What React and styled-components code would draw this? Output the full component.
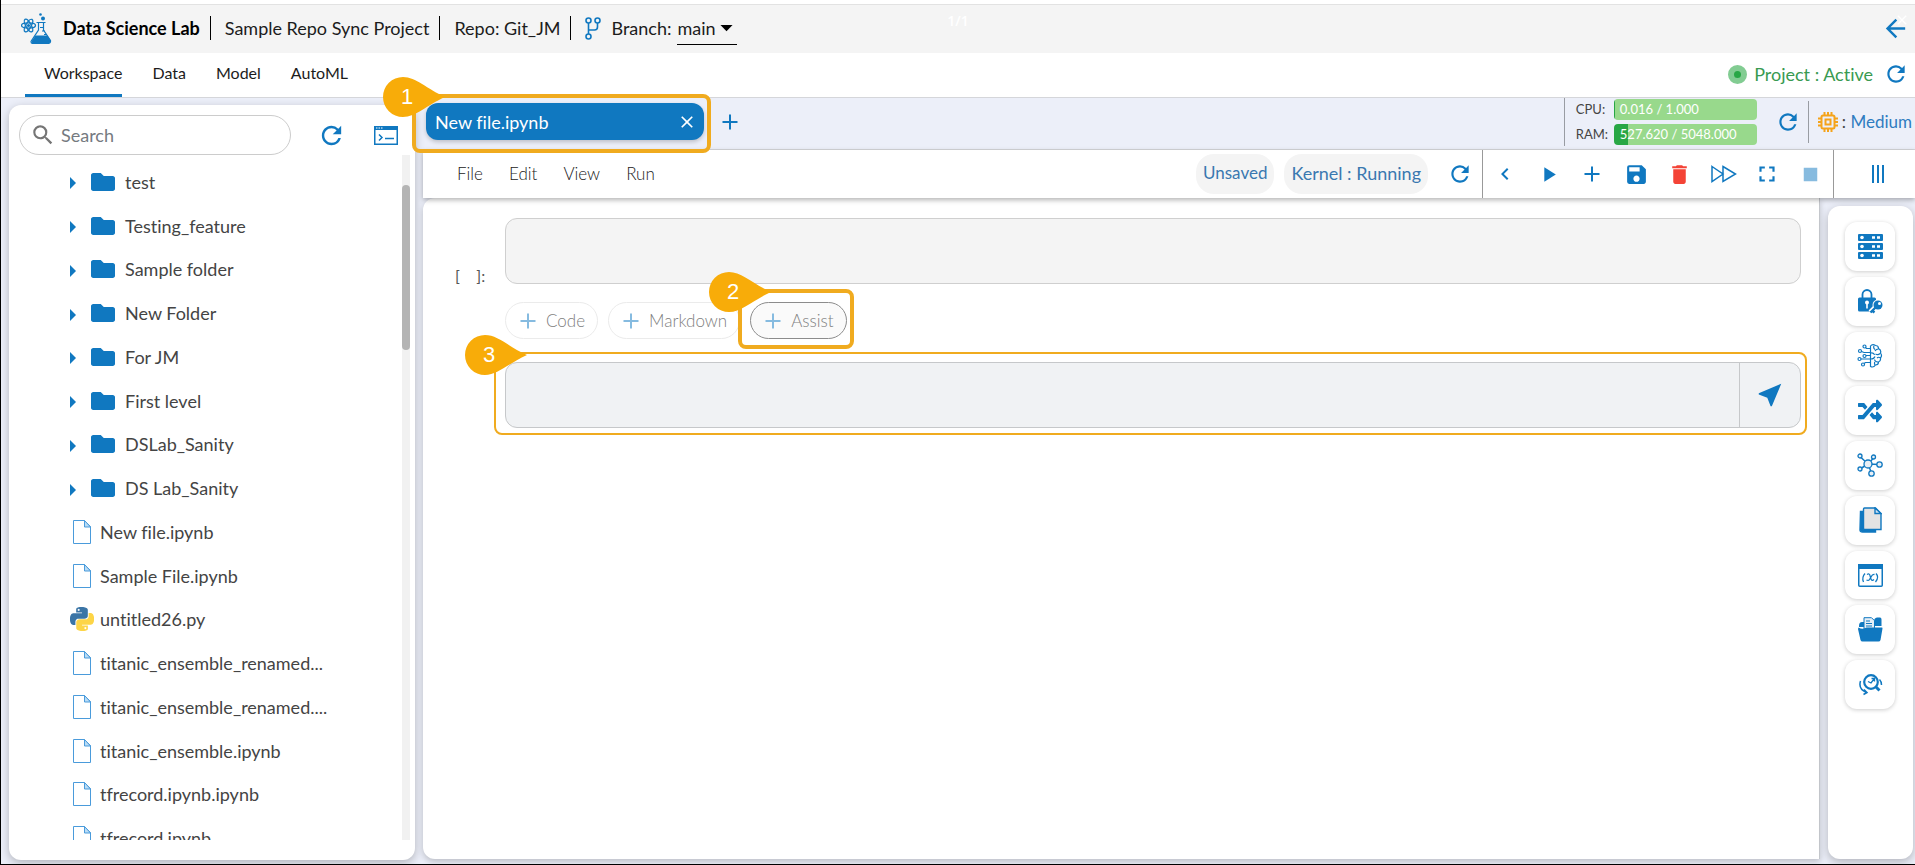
import React from "react";
import styled, { createGlobalStyle, css } from "styled-components";
import {
	MdArrowBack,
	MdArrowDropDown,
	MdChevronLeft,
	MdClose,
	MdDelete,
	MdFullscreen,
	MdNearMe,
	MdPlayArrow,
	MdRefresh,
	MdSave,
	MdSearch,
	MdStop,
} from "react-icons/md";
import { FaFolder, FaRandom } from "react-icons/fa";

const color = {
	blue: "#1078c0",
	lavender: "#eceff9",
	grey: "#f4f4f4",
	line: "#d5d6da",
	orange: "#f0ab1f",
	callout: "#f8ac09",
};

const GlobalStyle = createGlobalStyle`
	* {
		box-sizing: border-box;
	}
	body {
		margin: 0;
		font-family: Lato, "Open Sans", sans-serif;
		font-size: 18px;
		font-variant-ligatures: none;
		line-height: 24px;
		color: #444;
	}
	button,
	input,
	select,
	textarea {
		font: inherit;
		color: inherit;
		margin: 0;
	}
	svg {
		display: block;
		flex: none;
	}
`;

const Page = styled.div`
	display: flex;
	flex-direction: column;
	height: 100vh;
	overflow: hidden;
	border-left: 1px solid #000;
	border-bottom: 1px solid #000;
	background: ${color.lavender};
`;

const TopStrip = styled.div`
	flex: none;
	height: 5px;
	background: #fff;
	border-bottom: 1px solid #e2e2e2;
`;

const Header = styled.header`
	flex: none;
	display: flex;
	align-items: center;
	height: 48px;
	padding: 0 8px 2px 20px;
	background: ${color.grey};
	color: #1c1c1c;
	position: relative;
`;

const Title = styled.h1`
	margin: 0 10px 0 11px;
	font-size: 18px;
	font-weight: 700;
	color: #000;
`;

const Crumb = styled.span`
	padding: 0 10px 0 14px;
	border-left: 1px solid #000;
`;

const BranchPicker = styled.div`
	display: flex;
	align-items: center;
	height: 24px;
	padding-left: 14px;
	border-left: 1px solid #000;

	label {
		margin: 0 6px 0 10px;
	}
`;

const SelectBox = styled.div`
	display: flex;
	align-items: center;
	width: 60px;
	height: 33px;
	border-bottom: 1px solid #000;
	position: relative;

	select {
		width: 100%;
		padding: 0;
		border: none;
		background: none;
		appearance: none;
	}

	svg {
		position: absolute;
		right: -4px;
		color: #000;
		pointer-events: none;
	}
`;

const Counter = styled.span`
	position: absolute;
	left: 50%;
	top: 4px;
	transform: translateX(-50%);
	font-family: "Open Sans", sans-serif;
	font-size: 14px;
	font-weight: 600;
	color: #fff;
`;

const CornerClose = styled.div`
	position: absolute;
	right: 5px;
	top: 7px;
	color: #fff;
`;

const IconButton = styled.button`
	display: flex;
	align-items: center;
	justify-content: center;
	flex: none;
	width: ${(p) => p.$width || 32}px;
	height: 32px;
	padding: 0;
	border: none;
	background: none;
	color: ${(p) => p.$color || color.blue};
	cursor: pointer;
`;

const Spacer = styled.div`
	flex: 1;
`;

const Nav = styled.nav`
	flex: none;
	display: flex;
	align-items: stretch;
	gap: 30px;
	height: 45px;
	padding: 0 3px 0 43px;
	background: #fff;
	border-bottom: 1px solid ${color.line};
`;

const NavLink = styled.a`
	padding-top: 8px;
	font-size: 16px;
	color: #1c1c1c;
	text-decoration: none;
	position: relative;

	&::after {
		content: "";
		display: ${(p) => (p.$active ? "block" : "none")};
		position: absolute;
		left: -19px;
		right: 0;
		bottom: 0;
		height: 3px;
		background: ${color.blue};
	}
`;

const Status = styled.div`
	display: flex;
	align-items: center;
	gap: 7px;
	padding-bottom: 2px;
	color: #399a51;
`;

const Dot = styled.span`
	width: 19px;
	height: 19px;
	border-radius: 50%;
	border: 6px solid #82cc92;
	background: #28a745;
`;

const Body = styled.div`
	flex: 1;
	display: flex;
	min-height: 0;
`;

const card = css`
	background: #fff;
	border-radius: 12px;
	box-shadow: 0 3px 10px rgba(0, 0, 0, 0.25);
`;

const Sidebar = styled.aside`
	${card}
	flex: none;
	display: flex;
	flex-direction: column;
	width: 406px;
	margin: 7px 8px 4px;
	padding: 10px 5px 20px 10px;
`;

const SidebarTools = styled.div`
	flex: none;
	display: flex;
	align-items: center;
	height: 40px;
	padding-right: 8px;
`;

const SearchBox = styled.div`
	display: flex;
	align-items: center;
	width: 272px;
	height: 40px;
	margin-right: 24px;
	padding: 0 10px;
	border: 1px solid #ccc;
	border-radius: 20px;
	color: #757575;

	input {
		width: 100%;
		margin-left: 5px;
		padding: 0;
		border: none;
		outline: none;
		background: none;
	}

	input::placeholder {
		color: #757a80;
		opacity: 1;
	}
`;

const TreeViewport = styled.div`
	flex: 1;
	display: flex;
	min-height: 0;
	overflow: hidden;
`;

const Tree = styled.ul`
	flex: 1;
	display: grid;
	grid-auto-rows: 1fr;
	height: 705px;
	margin: 0;
	padding: 5px 0 0 51px;
	list-style: none;
`;

const TreeItem = styled.li`
	display: flex;
	align-items: center;
	gap: ${(p) => (p.$folder ? 10 : 6)}px;
	white-space: nowrap;
`;

const ScrollTrack = styled.div`
	width: 8px;
	padding-top: 30px;
	background: #f1f1f1;

	&::before {
		content: "";
		display: block;
		height: 165px;
		border-radius: 4px;
		background: #b4b4b4;
	}
`;

const Main = styled.main`
	flex: 1;
	display: flex;
	flex-direction: column;
	min-width: 0;
`;

const TabBar = styled.div`
	flex: none;
	display: flex;
	align-items: center;
	height: 52px;
	padding: 0 0 4px 3px;
	border-bottom: 1px solid ${color.line};
`;

const FileTab = styled.div`
	display: flex;
	align-items: center;
	width: 278px;
	height: 37px;
	margin-right: 10px;
	padding: 0 1px 0 9px;
	border-radius: 12px;
	background: ${color.blue};
	color: #fff;
	box-shadow: 0 2px 4px rgba(0, 0, 0, 0.2);
	position: relative;
`;

const Highlight = styled.div`
	position: absolute;
	inset: ${(p) => p.$inset};
	border: ${(p) => p.$stroke || 4}px solid ${color.orange};
	border-radius: 8px;
	pointer-events: none;
	z-index: 2;
`;

const CalloutShape = styled.div`
	position: absolute;
	left: ${(p) => p.$left}px;
	top: ${(p) => p.$top}px;
	width: 62px;
	height: 40px;
	color: #fff;
	font-family: "Liberation Sans", sans-serif;
	font-size: 22px;
	line-height: 40px;

	svg {
		position: absolute;
	}

	span {
		position: relative;
		display: block;
		width: 48px;
		text-align: center;
	}
`;

const Usage = styled.div`
	display: flex;
	flex-direction: column;
	justify-content: center;
	gap: 4px;
	height: 48px;
	margin-right: 15px;
	padding-left: 11px;
	border-left: 1px solid #999ca3;
`;

const UsageRow = styled.div`
	display: flex;
	align-items: center;
	height: 21px;
	font-size: 13px;

	> span {
		width: 38px;
	}
`;

const Meter = styled.div`
	display: flex;
	align-items: center;
	width: 143px;
	height: 21px;
	padding-left: 6px;
	border-radius: 4px;
	color: #fff;
	background: linear-gradient(90deg, #28a745 ${(p) => p.$percent}%, #98d98c ${(p) => p.$percent}%);
`;

const Machine = styled.div`
	display: flex;
	align-items: center;
	gap: 4px;
	height: 42px;
	margin-left: 4px;
	padding: 0 3px 0 9px;
	border-left: 1px solid #999ca3;
	font-size: 17px;

	b {
		font-weight: 400;
		color: #2f7cc0;
	}
`;

const Toolbar = styled.div`
	flex: none;
	display: flex;
	align-items: center;
	height: 48px;
	padding-left: 21px;
	background: #fff;
	box-shadow: 0 2px 5px rgba(0, 0, 0, 0.3);
	position: relative;
	z-index: 1;
`;

const MenuButton = styled.button`
	padding: 0 13px;
	border: none;
	background: none;
	font-size: 17px;
	font-weight: 300;
	color: #222;
	cursor: pointer;
`;

const Pill = styled.span`
	display: flex;
	align-items: center;
	height: 40px;
	margin-right: 10px;
	padding: 0 7px 2px;
	border-radius: 18px;
	background: ${color.grey};
	font-size: ${(p) => p.$size || 18}px;
	color: #3a78b0;
`;

const ToolGroup = styled.div`
	display: flex;
	align-items: center;
	justify-content: space-between;
	width: ${(p) => p.$width}px;
	height: 48px;
	padding: 0 6px;
	border-left: 1px solid #999;
`;

const PanelToggle = styled.div`
	display: flex;
	align-items: center;
	height: 48px;
	padding: 0 21px 0 28px;
	border-left: 1px solid #999;
`;

const Workspace = styled.div`
	flex: 1;
	display: flex;
	min-height: 0;
`;

const Notebook = styled.section`
	flex: 1;
	margin-bottom: 5px;
	padding: 20px 18px 0 32px;
	border-right: 1px solid #c4c7cc;
	border-radius: 12px 0 0 12px;
	background: #fff;
	box-shadow: 0 3px 6px rgba(0, 0, 0, 0.2);
`;

const Cell = styled.div`
	display: grid;
	grid-template-columns: 50px 1fr;
	row-gap: 18px;
`;

const Prompt = styled.span`
	align-self: end;
	margin-bottom: -4px;
	font-size: 16px;
	color: #555;
	white-space: pre;
`;

const CodeInput = styled.textarea`
	display: block;
	width: 100%;
	height: 66px;
	border: 1px solid #cfcfcf;
	border-radius: 12px;
	background: ${color.grey};
	resize: none;
`;

const CellActions = styled.div`
	grid-column: 2;
	display: flex;
	gap: 10px;
`;

const AddButton = styled.button`
	display: flex;
	align-items: center;
	gap: 10px;
	height: 37px;
	padding: 0 12px 0 14px;
	border: 1px solid ${(p) => (p.$strong ? "#8c8c8c" : "#ebebeb")};
	border-radius: 19px;
	background: ${(p) => (p.$strong ? "#fafafa" : "#fff")};
	font-size: 17px;
	font-weight: 300;
	color: #808080;
	cursor: pointer;

	svg {
		color: #86bbe0;
	}
`;

const Anchor = styled.div`
	position: relative;
`;

const AssistRow = styled.form`
	grid-column: 2;
	display: flex;
	height: 66px;
	margin-top: 5px;
	border: 1px solid #c6c8ca;
	border-radius: 12px;
	background: #f0f2f4;
	position: relative;

	input {
		flex: 1;
		padding: 0 12px;
		border: none;
		outline: none;
		background: none;
	}
`;

const SendButton = styled.button`
	display: flex;
	align-items: center;
	justify-content: center;
	width: 61px;
	padding: 0;
	border: none;
	border-left: 1px solid #c6c8ca;
	background: none;
	color: ${color.blue};
`;

const Rail = styled.div`
	flex: none;
	display: flex;
	padding: 8px 2px 5px 8px;
`;

const RailCard = styled.div`
	${card}
	width: 85px;
	padding: 16px 17px;
`;

const RailList = styled.div`
	display: grid;
	grid-auto-rows: 1fr;
	gap: 6px;
	height: 487px;
`;

const RailButton = styled.button`
	display: flex;
	align-items: center;
	justify-content: center;
	width: 50px;
	padding: 0;
	border: none;
	border-radius: 12px;
	background: #fff;
	color: ${color.blue};
	box-shadow: 0 1px 4px rgba(0, 0, 0, 0.2);
`;

const ShuffleIcon = styled(FaRandom)`
	width: 24px;
	height: 26px;
`;

const LogoIcon = () => (
	<svg width="31" height="31" viewBox="0 0 31 31" fill="none" stroke={color.blue}>
		<g strokeWidth="1.3">
			<ellipse cx="7.5" cy="12.5" rx="7" ry="2.6" />
			<ellipse cx="7.5" cy="12.5" rx="7" ry="2.6" transform="rotate(60 7.5 12.5)" />
			<ellipse cx="7.5" cy="12.5" rx="7" ry="2.6" transform="rotate(120 7.5 12.5)" />
		</g>
		<circle cx="7.5" cy="12.5" r="1.6" fill={color.blue} stroke="none" />
		<path
			d="M15.5 9.5h9M17.5 10v7L10 28.5q0 2 2 2h15.5q2.5-.5 2-3L22.5 17v-7M22 14.5h-3M24 18h-3M26 21.5h-3"
			strokeWidth="1.2"
		/>
		<path d="M14.5 22.5h12l3 5q0 3-2.5 3H12.500q-2.500-.5-1.500-3z" fill={color.blue} stroke="none" />
		<circle cx="22" cy="5.5" r="2" fill={color.blue} stroke="none" />
		<circle cx="19.5" cy="1.5" r="1.3" fill={color.blue} stroke="none" />
	</svg>
);

const BranchIcon = () => (
	<svg width="16" height="23" viewBox="0 0 16 23" fill="none" stroke={color.blue} strokeWidth="1.6">
		<circle cx="3.5" cy="3.5" r="2.5" />
		<circle cx="12.5" cy="3.5" r="2.5" />
		<circle cx="3.5" cy="19.5" r="2.5" />
		<path d="M3.5 6v11M12.5 6v4q0 3-3 3h-6" />
	</svg>
);

const TerminalIcon = () => (
	<svg width="24" height="19" viewBox="0 0 24 19">
		<path d="M.75.75h22.5v17.5H.75z" fill="#fff" stroke={color.blue} strokeWidth="1.5" />
		<path d="M0 0h24v4H0z" fill={color.blue} />
		<path d="M2 2h1.5M4.5 2H6M7 2h1.5" stroke="#fff" />
		<path d="M5 8.5l3 3-3 3M11 12.5h9" fill="none" stroke={color.blue} strokeWidth="1.5" />
	</svg>
);

const Caret = styled.span`
	margin: 3px 5px 0 0;
	border: 6px solid transparent;
	border-left-color: ${color.blue};
	border-right: none;
`;

const FileIcon = () => (
	<svg width="24" height="24" viewBox="0 0 24 24" stroke="#4a9bdb">
		<path d="M3.5.5h11l6 6v17h-17z" fill="#fff" />
		<path d="M14.5.5v6.5h6z" fill="#b9dcf6" />
	</svg>
);

const PythonIcon = () => (
	<svg width="24" height="24" viewBox="0 0 24 24">
		<path
			fill="#3b75a6"
			d="M14.25.18l.9.2.73.26.59.3.45.32.34.34.25.34.16.33.1.3.04.26.02.2-.01.13V8.5l-.05.63-.13.55-.21.46-.26.38-.3.31-.33.25-.35.19-.35.14-.33.1-.3.07-.26.04-.21.02H8.77l-.69.05-.59.14-.5.22-.41.27-.33.32-.27.35-.2.36-.15.37-.1.35-.07.32-.04.27-.02.21v3.06H3.17l-.21-.03-.28-.07-.32-.12-.35-.18-.36-.26-.36-.36-.35-.46-.32-.59-.28-.73-.21-.88-.14-1.05-.05-1.23.06-1.22.16-1.04.24-.87.32-.71.36-.57.4-.44.42-.33.42-.24.4-.16.36-.1.32-.05.24-.01h.16l.06.01h8.16v-.83H6.18l-.01-2.75-.02-.37.05-.34.11-.31.17-.28.25-.26.31-.23.38-.2.44-.18.51-.15.58-.12.64-.1.71-.06.77-.04.84-.02 1.27.05zm-6.3 1.98l-.23.33-.08.41.08.41.23.34.33.22.41.09.41-.09.33-.22.23-.34.08-.41-.08-.41-.23-.33-.33-.22-.41-.09-.41.09z"
		/>
		<path
			fill="#fdd547"
			d="M21.1 6.11l.28.06.32.12.35.18.36.27.36.35.35.47.32.59.28.73.21.88.14 1.04.05 1.23-.06 1.23-.16 1.04-.24.86-.32.71-.36.57-.4.45-.42.33-.42.24-.4.16-.36.09-.32.05-.24.02-.16-.01h-8.22v.82h5.84l.01 2.76.02.36-.05.34-.11.31-.17.29-.25.25-.31.24-.38.2-.44.17-.51.15-.58.13-.64.09-.71.07-.77.04-.84.01-1.27-.04-1.07-.14-.9-.2-.73-.25-.59-.3-.45-.33-.34-.34-.25-.34-.16-.33-.1-.3-.04-.25-.02-.2.01-.13v-5.34l.05-.64.13-.54.21-.46.26-.38.3-.32.33-.24.35-.2.35-.14.33-.1.3-.06.26-.04.21-.02.13-.01h5.84l.69-.05.59-.14.5-.21.41-.28.33-.32.27-.35.2-.36.15-.36.1-.35.07-.32.04-.28.02-.21V6.07h2.09l.14.01zm-6.47 14.25l-.23.33-.08.41.08.41.23.33.33.23.41.08.41-.08.33-.23.23-.33.08-.41-.08-.41-.23-.33-.33-.23-.41-.08-.41.08z"
		/>
	</svg>
);

const ChipIcon = () => (
	<svg width="20" height="20" viewBox="0 0 20 20" fill="none" stroke="#f5a31a" strokeWidth="2">
		<rect x="3.5" y="3.5" width="13" height="13" rx="1.5" />
		<rect x="7.5" y="7.5" width="5" height="5" />
		<path d="M6.5 0v3M10 0v3M13.5 0v3M6.5 17v3M10 17v3M13.5 17v3M0 6.5h3M0 10h3M0 13.5h3M17 6.5h3M17 10h3M17 13.5h3" />
	</svg>
);

const PlusIcon = () => (
	<svg width="16" height="16" viewBox="0 0 16 16" fill="none" stroke="currentColor" strokeWidth="2">
		<path d="M8 .5v15M.5 8h15" />
	</svg>
);

const RunAllIcon = () => (
	<svg width="26" height="18" viewBox="0 0 26 18" fill="none" stroke="currentColor" strokeWidth="1.5">
		<path d="M1 1.5L12 9 1 16.5zM12 1.5L24.5 9 12 16.5z" />
	</svg>
);

const BarsIcon = () => (
	<svg width="14" height="18" viewBox="0 0 14 18" stroke="currentColor" strokeWidth="2">
		<path d="M2 0v18M7 0v18M12 0v18" />
	</svg>
);

const ServerIcon = () => (
	<svg width="25" height="25" viewBox="0 0 25 25">
		{[0, 9, 18].map((y) => (
			<g key={y}>
				<rect y={y} width="25" height="7" rx="1" fill={color.blue} />
				<circle cx="4" cy={y + 3.5} r="1.8" fill="#fff" />
				<path d={`M14 ${y + 3.5}h3M19 ${y + 3.5}h3`} stroke="#fff" strokeWidth="2.5" />
			</g>
		))}
	</svg>
);

const LockKeyIcon = () => (
	<svg width="25" height="25" viewBox="0 0 25 25">
		<path d="M4.5 9V5.5a4.5 4.5 0 019 0V9" fill="none" stroke={color.blue} strokeWidth="1.8" />
		<path d="M1.5 8.5h15q1.5 0 1.5 1.5v3l-6 9.5H1.5Q0 22.5 0 21V10q0-1.5 1.5-1.5z" fill={color.blue} />
		<circle cx="9" cy="13.5" r="2" fill="#fff" />
		<path d="M9 14v5.5" stroke="#fff" strokeWidth="1.6" />
		<circle cx="20" cy="16" r="5.5" fill="#fff" />
		<path d="M17 19l-4.5 4.5" stroke="#fff" strokeWidth="5.5" />
		<circle cx="20" cy="16" r="4.5" fill={color.blue} />
		<path d="M18 18l-5.5 5.500M14 21.500l2.500 2" stroke={color.blue} strokeWidth="2.4" />
		<circle cx="21.5" cy="14.5" r="1.5" fill="#fff" />
	</svg>
);

const BrainIcon = () => (
	<svg width="26" height="26" viewBox="0 0 26 26" fill="none" stroke={color.blue} strokeWidth="1.2">
		<path d="M13.5 3q2-2.5 5-.5 3 0 3 3 3 1.5 2 4.5 2 2.5 0 5 .5 3-2 4 0 3-3 3-2 3-5 1.5zM17 3q-1 2 1 3.5M21.5 6q-2.500 0-3.500 2M23 10.5q-2 2-4.500.5M14 10q3-.5 3.500 2M23.500 15q-2-1.500-3.500 0M14 16q3 0 4-2.500M21 19q-3 0-3.500-2.500M18 22q-1-2 0-3" />
		<path d="M13 5.500H9.500L8.500 4.500M13 9.500H7L4.500 8.500M13 12.500H9M13 16H4M13 19.500H8.500L7 20.500" />
		<circle cx="7.5" cy="3.5" r="1.5" />
		<circle cx="3" cy="8" r="1.5" />
		<circle cx="7.5" cy="13" r="1.5" />
		<circle cx="2.5" cy="16" r="1.5" />
		<circle cx="6" cy="21.5" r="1.5" />
	</svg>
);

const NodesIcon = () => (
	<svg width="26" height="24" viewBox="0 0 26 24" stroke={color.blue} strokeWidth="1.3" fill="#e9eff5">
		<path d="M11 11L3 3.500M11 11L3 16M11 11l6-6.500M11 11l11.500.5M11 11l3.500 9" strokeWidth="1.5" />
		<circle cx="11" cy="11" r="4" />
		<circle cx="3" cy="3" r="2" />
		<circle cx="3" cy="16" r="2" />
		<circle cx="16.5" cy="4" r="2" />
		<circle cx="22.5" cy="11.5" r="2.7" />
		<circle cx="14.5" cy="20.5" r="2.7" />
	</svg>
);

const CopyIcon = () => (
	<svg width="23" height="26" viewBox="0 0 23 26" strokeWidth="1.4">
		<path d="M1.5 4.5h15V25h-13Q1 25 1 23z" fill={color.blue} stroke={color.blue} />
		<path d="M5.5 1h11L22 6.5v16H5.5q-1 0-1-1.500V2.500Q4.500 1 5.500 1z" fill="#e3e3e3" stroke={color.blue} />
		<path d="M16 1v5.500h6z" fill="#cfe2f2" stroke={color.blue} />
	</svg>
);

const VariableIcon = () => (
	<svg width="25" height="23" viewBox="0 0 25 23" fill="none" stroke={color.blue}>
		<rect x=".75" y=".75" width="23.5" height="21.5" rx="1" strokeWidth="1.5" />
		<path d="M0 0h25v5H0z" fill={color.blue} stroke="none" />
		<path
			d="M7 9.500q-3.500 4-1.500 8.500M18 9.500q3.500 3.500-.5 8.500M9 10.500q2.500-1.500 3 1l1 3.500q1 2.500 3 .5M16.500 10.500q-2-.5-3.500 2.500l-1.500 2.500q-1 1.500-3 .5"
			strokeWidth="1.3"
		/>
	</svg>
);

const FolderDocIcon = () => (
	<svg width="25" height="25" viewBox="0 0 25 25">
		<path d="M1 9q0-4 3-4h2v5H1zM16 4q0-3 3-3.500h3q1.500 0 1.500 2V9H16z" fill={color.blue} />
		<path d="M6 .7h7.5l3 3V12H6z" fill="#e6eef5" stroke={color.blue} />
		<path d="M8 4h4M8 6.5h6M8 9h6" stroke={color.blue} />
		<path
			d="M.5 10.500q4 2.500 8 0H24q.5 0 .5 1l-2 11.500q-.5 1.500-2 1.500h-16q-1.500 0-2-1.500L0 12z"
			fill={color.blue}
		/>
	</svg>
);

const InspectIcon = () => (
	<svg width="25" height="24" viewBox="0 0 25 24" fill="none" stroke={color.blue}>
		<circle cx="13" cy="9" r="6.8" strokeWidth="2.2" />
		<path d="M17.5 13.5l4 4" strokeWidth="3" />
		<path d="M10 8.5l3 1.500 3-4M13.500 5.500h3v3" strokeWidth="1.3" />
		<path d="M2.5 8Q0 16 8.500 19.500M6 16.500l3 3-3.500 2M21.500 6.500q2 2 2 5.500" strokeWidth="1.5" />
	</svg>
);

const Callout = ({ number, left = -33, top = -21 }) => (
	<CalloutShape $left={left} $top={top}>
		<svg width="62" height="40" viewBox="0 0 62 40" fill={color.callout}>
			<path d="M20 0C33 0 44 12 62 20 44 28 33 40 20 40A20 20 0 0120 0z" />
		</svg>
		<span>{number}</span>
	</CalloutShape>
);

const folders = [
	"test",
	"Testing_feature",
	"Sample folder",
	"New Folder",
	"For JM",
	"First level",
	"DSLab_Sanity",
	"DS Lab_Sanity",
];

const files = [
	"New file.ipynb",
	"Sample File.ipynb",
	"untitled26.py",
	"titanic_ensemble_renamed...",
	"titanic_ensemble_renamed....",
	"titanic_ensemble.ipynb",
	"tfrecord.ipynb.ipynb",
	"tfrecord.ipynb",
];

const railItems = [
	["Datasets", <ServerIcon />],
	["Secrets", <LockKeyIcon />],
	["Algorithms", <BrainIcon />],
	["Transforms", <ShuffleIcon preserveAspectRatio="none" />],
	["Models", <NodesIcon />],
	["Artifacts", <CopyIcon />],
	["Variables", <VariableIcon />],
	["Files", <FolderDocIcon />],
	["Inspect", <InspectIcon />],
];

const TopHeader = () => (
	<Header>
		<LogoIcon />
		<Title>Data Science Lab</Title>
		<Crumb>Sample Repo Sync Project</Crumb>
		<Crumb>Repo: Git_JM</Crumb>
		<BranchPicker>
			<BranchIcon />
			<label htmlFor="branch">Branch:</label>
			<SelectBox>
				<select id="branch" defaultValue="main">
					<option>main</option>
				</select>
				<MdArrowDropDown size={29} />
			</SelectBox>
		</BranchPicker>
		<Counter>1/1</Counter>
		<Spacer />
		<IconButton $width={24} aria-label="Back">
			<MdArrowBack size={29} />
		</IconButton>
		<CornerClose>
			<MdClose size={16} />
		</CornerClose>
	</Header>
);

const Navigation = () => (
	<Nav>
		<NavLink href="#workspace" $active>
			Workspace
		</NavLink>
		<NavLink href="#data">Data</NavLink>
		<NavLink href="#model">Model</NavLink>
		<NavLink href="#automl">AutoML</NavLink>
		<Spacer />
		<Status>
			<Dot />
			Project : Active
			<IconButton aria-label="Refresh project">
				<MdRefresh size={26} />
			</IconButton>
		</Status>
	</Nav>
);

const FileTree = () => (
	<Sidebar>
		<SidebarTools>
			<SearchBox>
				<MdSearch size={26} />
				<input type="search" placeholder="Search" aria-label="Search" />
			</SearchBox>
			<IconButton aria-label="Refresh files">
				<MdRefresh size={29} />
			</IconButton>
			<Spacer />
			<IconButton aria-label="Terminal">
				<TerminalIcon />
			</IconButton>
		</SidebarTools>
		<TreeViewport>
			<Tree>
				{folders.map((name) => (
					<TreeItem key={name} $folder>
						<Caret />
						<FaFolder size={24} color={color.blue} />
						{name}
					</TreeItem>
				))}
				{files.map((name) => (
					<TreeItem key={name}>
						{name.endsWith(".py") ? <PythonIcon /> : <FileIcon />}
						{name}
					</TreeItem>
				))}
			</Tree>
			<ScrollTrack />
		</TreeViewport>
	</Sidebar>
);

const Tabs = () => (
	<TabBar>
		<FileTab>
			New file.ipynb
			<Spacer />
			<IconButton $color="#fff" aria-label="Close file">
				<MdClose size={20} />
			</IconButton>
			<Highlight $inset="-9px -7px -13px -14px">
				<Callout number={1} />
			</Highlight>
		</FileTab>
		<IconButton aria-label="New tab">
			<PlusIcon />
		</IconButton>
		<Spacer />
		<Usage>
			<UsageRow>
				<span>CPU:</span>
				<Meter $percent={1}>0.016 / 1.000</Meter>
			</UsageRow>
			<UsageRow>
				<span>RAM:</span>
				<Meter $percent={10}>527.620 / 5048.000</Meter>
			</UsageRow>
		</Usage>
		<IconButton aria-label="Refresh usage">
			<MdRefresh size={26} />
		</IconButton>
		<Machine>
			<ChipIcon />
			<span>
				: <b>Medium</b>
			</span>
		</Machine>
	</TabBar>
);

const NotebookToolbar = () => (
	<Toolbar>
		<MenuButton>File</MenuButton>
		<MenuButton>Edit</MenuButton>
		<MenuButton>View</MenuButton>
		<MenuButton>Run</MenuButton>
		<Spacer />
		<Pill $size={17}>Unsaved</Pill>
		<Pill>Kernel : Running</Pill>
		<IconButton $width={44} aria-label="Restart kernel">
			<MdRefresh size={26} />
		</IconButton>
		<ToolGroup $width={351}>
			<IconButton aria-label="Previous">
				<MdChevronLeft size={24} />
			</IconButton>
			<IconButton aria-label="Run cell">
				<MdPlayArrow size={25} />
			</IconButton>
			<IconButton aria-label="Add cell">
				<PlusIcon />
			</IconButton>
			<IconButton aria-label="Save">
				<MdSave size={25} />
			</IconButton>
			<IconButton $color="#f44336" aria-label="Delete">
				<MdDelete size={25} />
			</IconButton>
			<IconButton aria-label="Run all">
				<RunAllIcon />
			</IconButton>
			<IconButton aria-label="Full screen">
				<MdFullscreen size={26} />
			</IconButton>
			<IconButton $color="#87bbdf" aria-label="Stop">
				<MdStop size={27} />
			</IconButton>
		</ToolGroup>
		<PanelToggle>
			<IconButton aria-label="Panels">
				<BarsIcon />
			</IconButton>
		</PanelToggle>
	</Toolbar>
);

const App = () => {
	return (
		<>
			<GlobalStyle />
			<Page>
				<TopStrip />
				<TopHeader />
				<Navigation />
				<Body>
					<FileTree />
					<Main>
						<Tabs />
						<NotebookToolbar />
						<Workspace>
							<Notebook>
								<Cell>
									<Prompt>{"[    ]:"}</Prompt>
									<CodeInput aria-label="Code cell" />
									<CellActions>
										<AddButton>
											<PlusIcon />
											Code
										</AddButton>
										<AddButton>
											<PlusIcon />
											Markdown
										</AddButton>
										<Anchor>
											<AddButton $strong>
												<PlusIcon />
												Assist
											</AddButton>
											<Highlight $inset="-13px -7px -10px -12px">
												<Callout number={2} />
											</Highlight>
										</Anchor>
									</CellActions>
									<AssistRow>
										<input type="text" aria-label="Ask the assistant" />
										<SendButton type="button" aria-label="Send">
											<MdNearMe size={30} />
										</SendButton>
										<Highlight $inset="-11px -7px -8px -12px" $stroke={2}>
											<Callout number={3} left={-31} top={-19} />
										</Highlight>
									</AssistRow>
								</Cell>
							</Notebook>
							<Rail>
								<RailCard>
									<RailList>
										{railItems.map(([label, icon]) => (
											<RailButton key={label} aria-label={label}>
												{icon}
											</RailButton>
										))}
									</RailList>
								</RailCard>
							</Rail>
						</Workspace>
					</Main>
				</Body>
			</Page>
		</>
	);
};

export default App;
